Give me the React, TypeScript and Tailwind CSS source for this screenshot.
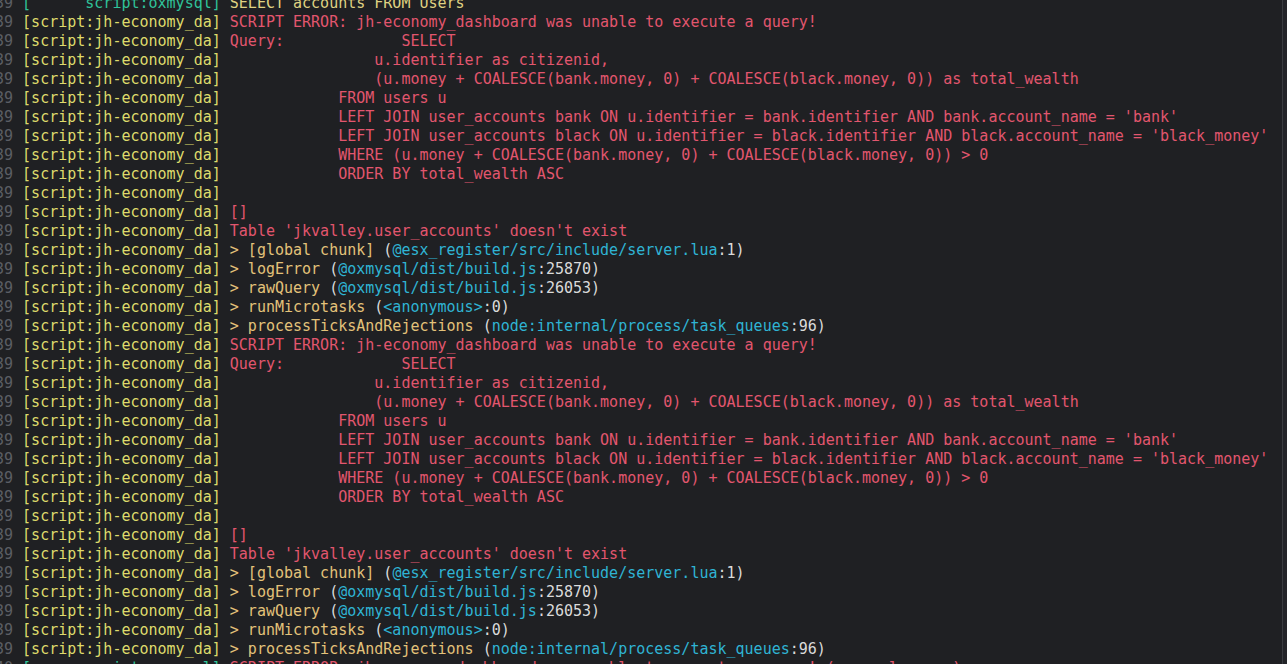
import React from "react";

type Seg = { t: string; c: string };

const C = {
  num: "text-[#5b5e64]",
  tag: "text-[#dedb6c]",
  ox: "text-[#2fc39a]",
  sel: "text-[#dfd282]",
  err: "text-[#e2566e]",
  fn: "text-[#e3c27a]",
  path: "text-[#2fb4d4]",
  txt: "text-[#dadada]",
};

const TAG = "[script:jh-economy_da]";

const errorBlock: Seg[][] = [
  [{ t: "SCRIPT ERROR: jh-economy_dashboard was unable to execute a query!", c: C.err }],
  [{ t: "Query:             SELECT", c: C.err }],
  [{ t: "                u.identifier as citizenid,", c: C.err }],
  [{ t: "                (u.money + COALESCE(bank.money, 0) + COALESCE(black.money, 0)) as total_wealth", c: C.err }],
  [{ t: "            FROM users u", c: C.err }],
  [{ t: "            LEFT JOIN user_accounts bank ON u.identifier = bank.identifier AND bank.account_name = 'bank'", c: C.err }],
  [{ t: "            LEFT JOIN user_accounts black ON u.identifier = black.identifier AND black.account_name = 'black_money'", c: C.err }],
  [{ t: "            WHERE (u.money + COALESCE(bank.money, 0) + COALESCE(black.money, 0)) > 0", c: C.err }],
  [{ t: "            ORDER BY total_wealth ASC", c: C.err }],
  [],
  [{ t: "[]", c: C.err }],
  [{ t: "Table 'jkvalley.user_accounts' doesn't exist", c: C.err }],
  [
    { t: "> [global chunk] ", c: C.fn },
    { t: "(", c: C.txt },
    { t: "@esx_register/src/include/server.lua", c: C.path },
    { t: ":1)", c: C.txt },
  ],
  [
    { t: "> logError ", c: C.fn },
    { t: "(", c: C.txt },
    { t: "@oxmysql/dist/build.js", c: C.path },
    { t: ":25870)", c: C.txt },
  ],
  [
    { t: "> rawQuery ", c: C.fn },
    { t: "(", c: C.txt },
    { t: "@oxmysql/dist/build.js", c: C.path },
    { t: ":26053)", c: C.txt },
  ],
  [
    { t: "> runMicrotasks ", c: C.fn },
    { t: "(", c: C.txt },
    { t: "<anonymous>", c: C.path },
    { t: ":0)", c: C.txt },
  ],
  [
    { t: "> processTicksAndRejections ", c: C.fn },
    { t: "(", c: C.txt },
    { t: "node:internal/process/task_queues", c: C.path },
    { t: ":96)", c: C.txt },
  ],
];

function Line({ num, tag, tagColor, segs }: { num: string; tag: string; tagColor: string; segs: Seg[] }) {
  return (
    <div className="h-[19px] leading-[19px] whitespace-pre">
      <span className={C.num}>{num} </span>
      <span className={tagColor}>{tag}</span>
      <span> </span>
      {segs.map((s, i) => (
        <span key={i} className={s.c}>
          {s.t}
        </span>
      ))}
    </div>
  );
}

export default function App() {
  return (
    <div className="w-[1287px] h-[664px] overflow-hidden bg-[#1f2023] flex">
      <div
        className="flex-1 -ml-[5px] -mt-[6px] text-[15px]"
        style={{ fontFamily: '"DejaVu Sans Mono", "Liberation Mono", monospace' }}
      >
        <Line num="39" tag="[      script:oxmysql]" tagColor={C.ox} segs={[{ t: "SELECT accounts FROM Users", c: C.sel }]} />
        {errorBlock.map((segs, i) => (
          <Line key={"a" + i} num="39" tag={TAG} tagColor={C.tag} segs={segs} />
        ))}
        {errorBlock.map((segs, i) => (
          <Line key={"b" + i} num="39" tag={TAG} tagColor={C.tag} segs={segs} />
        ))}
        <Line
          num="40"
          tag="[      script:oxmysql]"
          tagColor={C.ox}
          segs={[{ t: "SCRIPT ERROR: jh-economy_dashboard was unable to execute a query! (oxmysql error)", c: C.err }]}
        />
      </div>
      <div className="w-[5px] border-l border-[#3a3c40] bg-[#232428]" />
    </div>
  );
}
